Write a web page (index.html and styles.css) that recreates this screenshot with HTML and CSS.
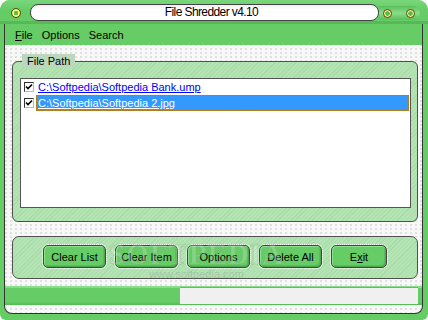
FILE: index.html
```html
<!DOCTYPE html>
<html lang="en">
<head>
    <meta charset="UTF-8">
    <title>File Shredder v4.10</title>
    <link rel="stylesheet" href="styles.css">
</head>
<body>
    <div class="window">
        <div class="titlebar">
            <span class="knob"></span>
            <div class="title">File Shredder v4.10</div>
            <div class="controls">
                <span class="knob small"></span>
                <span class="knob small"></span>
            </div>
        </div>
        <div class="inner">
            <div class="menubar">
                <span><u>F</u>ile</span>
                <span>Options</span>
                <span>Search</span>
            </div>
            <div class="content">
                <fieldset class="group">
                    <legend>File Path</legend>
                    <div class="list">
                        <div class="row">
                            <span class="check"><svg width="8" height="8" viewBox="0 0 8 8"><path d="M1 3.5 L3 5.5 L7 1.5" fill="none" stroke="#000" stroke-width="1.6"/></svg></span>
                            <span class="path">C:\Softpedia\Softpedia Bank.ump</span>
                        </div>
                        <div class="row selected">
                            <span class="check"><svg width="8" height="8" viewBox="0 0 8 8"><path d="M1 3.5 L3 5.5 L7 1.5" fill="none" stroke="#000" stroke-width="1.6"/></svg></span>
                            <span class="path">C:\Softpedia\Softpedia 2.jpg</span>
                        </div>
                    </div>
                </fieldset>
                <div class="buttons">
                    <button>Clear List</button>
                    <button>Clear Item</button>
                    <button>Options</button>
                    <button>Delete All</button>
                    <button class="exit">E<u>x</u>it</button>
                    <div class="watermark">
                        <span class="wm-big">SOFTPEDIA</span>
                        <span class="wm-url">www.softpedia.com</span>
                    </div>
                </div>
                <div class="status">
                    <div class="status-field"></div>
                </div>
            </div>
        </div>
    </div>
</body>
</html>
```

FILE: styles.css
```css
body {
    margin: 0;
    background: #ffffff;
    font-family: "Liberation Sans", Arial, sans-serif;
    font-size: 11px;
    color: #000;
}
.window {
    width: 428px;
    height: 320px;
    box-sizing: border-box;
    background: #66cc66;
    border-radius: 10px 10px 6px 6px;
    overflow: hidden;
    display: flex;
    flex-direction: column;
}

/* title bar */
.titlebar {
    height: 24px;
    box-sizing: border-box;
    display: flex;
    align-items: flex-start;
    padding: 4px 0 0 11px;
    background: linear-gradient(#7ad67a, #66cc66 40%);
    box-shadow: inset 0 -3px 0 #58b858;
}
.knob {
    width: 10px;
    height: 10px;
    box-sizing: border-box;
    margin-top: 4px;
    border-radius: 50%;
    border: 1px solid #4a4a2a;
    background: radial-gradient(circle, #55bb55 0 2px, #ffff66 2.5px 3.5px, #c8c840 4px);
}
.knob.small {
    width: 9px;
    height: 9px;
    margin-top: 0;
}
.title {
    margin-left: 9px;
    width: 349px;
    height: 17px;
    box-sizing: border-box;
    border: 1px solid #444;
    border-radius: 8px;
    background: linear-gradient(#f0f0f0, #ffffff 30%);
    text-align: center;
    padding-left: 14px;
    font-size: 12px;
    letter-spacing: -0.6px;
    line-height: 15px;
}
.controls {
    margin-top: 2px;
    width: 41px;
    height: 14px;
    box-sizing: border-box;
    border-radius: 0 7px 7px 0;
    background: linear-gradient(#5cbc5c, #8ade8a 50%, #5cbc5c);
    display: flex;
    align-items: center;
    justify-content: space-between;
    padding: 0 5px 0 4px;
}

/* main frame */
.inner {
    flex: 1;
    margin: 0 5px 6px 4px;
    border: 1px solid #333;
    border-top: none;
    border-radius: 0 0 8px 8px;
    background-color: #f8f8f8;
    background-image: radial-gradient(circle at 1px 1px, #e0e0e0 0.8px, transparent 1.3px);
    background-size: 5px 4px;
    display: flex;
    flex-direction: column;
}
.menubar {
    height: 21px;
    background: #66cc66;
    display: flex;
    align-items: center;
    gap: 9px;
    padding-left: 10px;
}
.content {
    padding: 9px 4px 8px 7px;
    display: flex;
    flex-direction: column;
}

/* file path group */
.group {
    margin: 0;
    min-width: 0;
    padding: 0 6px 13px 7px;
    border: 1px solid #505050;
    border-radius: 6px;
    background: repeating-linear-gradient(-45deg, #b4e4b4 0 2px, #a8dca8 2px 3px);
}
.group legend {
    margin-left: 2px;
    padding: 0 5px 0 5px;
    height: 14px;
    line-height: 14px;
    background: #bcd8bc;
}
.list {
    margin-top: 10px;
    height: 130px;
    box-sizing: border-box;
    border: 1px solid #555;
    background: #fff;
}
.row {
    height: 16px;
    display: flex;
    align-items: center;
    padding-left: 3px;
}
.check {
    width: 10px;
    height: 10px;
    box-sizing: border-box;
    border: 1px solid #333;
    border-right-color: #bbb;
    border-bottom-color: #bbb;
    background: #fff;
    display: flex;
    align-items: center;
    justify-content: center;
    margin-right: 2px;
}
.path {
    flex: 1;
    height: 16px;
    box-sizing: border-box;
    line-height: 14px;
    padding-left: 1px;
    margin-right: 1px;
    border: 1px solid transparent;
    color: #0000ff;
    text-decoration: underline;
}
.selected .path {
    background: #3399ff;
    color: #fff;
    border: 1px dotted #b07a20;
}

/* buttons */
.buttons {
    position: relative;
    margin-top: 14px;
    height: 43px;
    box-sizing: border-box;
    border: 1px solid #505050;
    border-radius: 7px;
    background: repeating-linear-gradient(-45deg, #b4e4b4 0 2px, #a8dca8 2px 3px);
    display: flex;
    gap: 9px;
    padding: 8px 0 0 30px;
}
.buttons button {
    width: 63px;
    height: 23px;
    box-sizing: border-box;
    border: 1px solid #444;
    border-radius: 5px;
    outline: 1px dotted #fff;
    background: #66cc66;
    box-shadow: inset 1px 1px 0 #8fe08f, inset -1px -1px 0 #4ea84e, inset -2px -2px 0 #5cbc5c;
    font-family: "Liberation Sans", Arial, sans-serif;
    font-size: 11px;
    color: #000;
    padding: 0;
}
.buttons .exit {
    width: 56px;
}
.watermark {
    position: absolute;
    left: 96px;
    top: 2px;
    display: flex;
    flex-direction: column;
    align-items: center;
    pointer-events: none;
}
.wm-big {
    font-family: "Liberation Serif", serif;
    font-size: 29px;
    font-weight: bold;
    letter-spacing: 1px;
    line-height: 30px;
    color: rgba(255, 255, 255, 0.2);
    -webkit-text-stroke: 1px rgba(120, 160, 120, 0.3);
}
.wm-url {
    font-size: 11px;
    line-height: 10px;
    color: rgba(150, 150, 150, 0.4);
}

/* status bar */
.status {
    margin: 7px -4px 0 -7px;
    height: 19px;
    background: linear-gradient(#88dd88 0 2px, #66cc66 2px 16px, #55b855);
    display: flex;
    justify-content: flex-end;
    padding: 1px 4px 1px 0;
    box-sizing: border-box;
}
.status-field {
    width: 238px;
    background: #f0f0f0;
    border-top: 1px solid #999;
}
```
